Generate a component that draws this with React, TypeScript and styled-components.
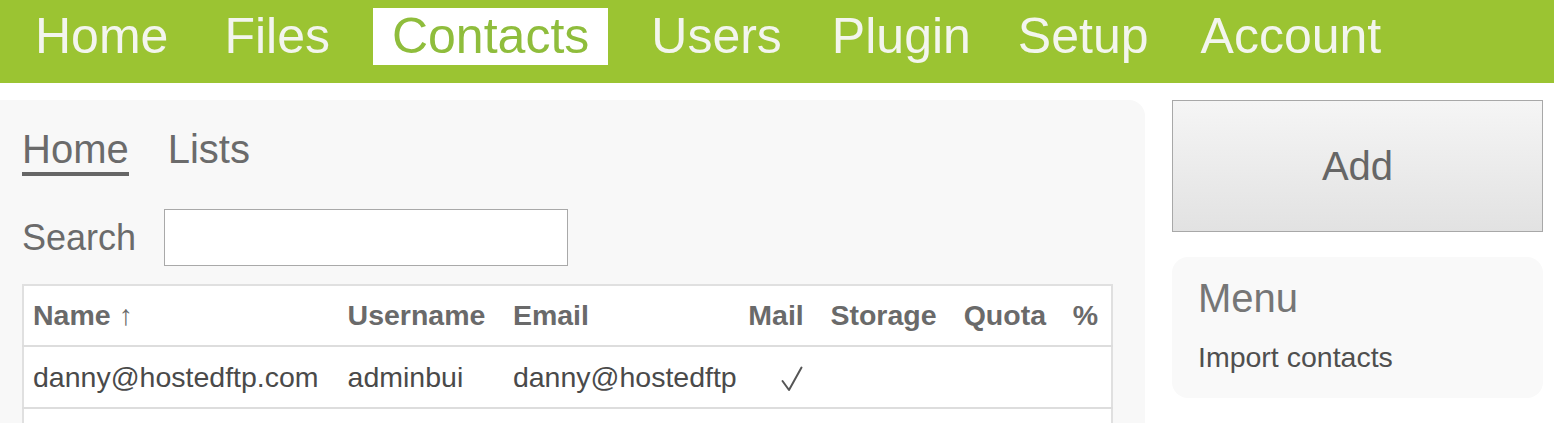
import React from "react";
import styled, { createGlobalStyle } from "styled-components";

const GlobalStyle = createGlobalStyle`
  html, body {
    margin: 0;
    padding: 0;
    background: #ffffff;
    font-family: "Liberation Sans", Arial, sans-serif;
  }
`;

const Page = styled.div`
  width: 1554px;
  height: 423px;
  overflow: hidden;
`;

const TopBar = styled.nav`
  height: 83px;
  background: #9bc432;
  display: flex;
  align-items: flex-start;
  padding-left: 16px;
  box-sizing: border-box;
`;

const NavItem = styled.a<{ $active?: boolean; $gap: number }>`
  display: block;
  margin-top: 8px;
  margin-right: ${(p) => p.$gap}px;
  padding: 0 19px;
  height: 57px;
  line-height: 57px;
  font-size: 50px;
  color: ${(p) => (p.$active ? "#8fbd3c" : "#f3f5ee")};
  background: ${(p) => (p.$active ? "#ffffff" : "transparent")};
  text-decoration: none;
  white-space: nowrap;
`;

const Body = styled.div`
  display: flex;
  align-items: flex-start;
  padding-top: 17px;
`;

const MainPanel = styled.section`
  width: 1145px;
  height: 340px;
  box-sizing: border-box;
  background: #f8f8f8;
  border-radius: 0 16px 0 0;
  padding: 26px 0 0 22px;
`;

const Tabs = styled.div`
  display: flex;
  gap: 39px;
  align-items: flex-start;
`;

const Tab = styled.a<{ $active?: boolean }>`
  font-size: 40px;
  line-height: 46px;
  color: #6b6b6b;
  text-decoration: none;
  border-bottom: 4px solid ${(p) => (p.$active ? "#666666" : "transparent")};
`;

const SearchRow = styled.div`
  display: flex;
  align-items: center;
  gap: 28px;
  margin-top: 33px;
`;

const SearchLabel = styled.label`
  font-size: 36px;
  color: #6b6b6b;
`;

const SearchInput = styled.input`
  width: 404px;
  height: 57px;
  box-sizing: border-box;
  border: 1px solid #a9a9a9;
  background: #ffffff;
  margin: 0;
  padding: 0 8px;
  font-size: 28px;
  font-family: inherit;
`;

const Table = styled.table`
  margin-top: 18px;
  width: 1091px;
  border-collapse: collapse;
  table-layout: fixed;
  background: #ffffff;
  border: 2px solid #e0e0e0;
  font-size: 28.5px;
`;

const Col = styled.col<{ $w: number }>`
  width: ${(p) => p.$w}px;
`;

const HeadCell = styled.th<{ $align?: string }>`
  height: 59px;
  padding: 0 18px 0 9px;
  text-align: ${(p) => p.$align || "left"};
  font-weight: bold;
  color: #6a6a6a;
  white-space: nowrap;
  overflow: hidden;
  border-bottom: 2px solid #dddddd;
`;

const Arrow = styled.span`
  font-weight: normal;
`;

const Cell = styled.td<{ $align?: string }>`
  height: 60px;
  padding: 0 18px 0 9px;
  text-align: ${(p) => p.$align || "left"};
  color: #4a4a4a;
  white-space: nowrap;
  overflow: hidden;
  border-bottom: 2px solid #dddddd;
`;

const ClipCell = styled(Cell)`
  padding-right: 0;
`;

const CheckIcon = styled.svg`
  display: inline-block;
  vertical-align: middle;
`;

const Side = styled.aside`
  margin-left: 27px;
  width: 371px;
  display: flex;
  flex-direction: column;
  gap: 25px;
`;

const AddButton = styled.button`
  height: 132px;
  width: 371px;
  border: 1px solid #a8a8a8;
  background: linear-gradient(#f5f5f5, #e2e2e2);
  color: #666666;
  font-size: 40px;
  font-family: inherit;
  padding: 0;
  margin: 0;
`;

const MenuBox = styled.div`
  height: 141px;
  box-sizing: border-box;
  background: #f9f9f9;
  border-radius: 16px;
  padding: 18px 0 0 26px;
`;

const MenuTitle = styled.div`
  font-size: 40px;
  line-height: 46px;
  color: #767676;
`;

const MenuLink = styled.a`
  display: block;
  margin-top: 20px;
  font-size: 28.5px;
  color: #4f4f4f;
  text-decoration: none;
`;

const navItems: { label: string; gap: number }[] = [
  { label: "Home", gap: 18 },
  { label: "Files", gap: 24 },
  { label: "Contacts", gap: 24 },
  { label: "Users", gap: 12 },
  { label: "Plugin", gap: 9 },
  { label: "Setup", gap: 14 },
  { label: "Account", gap: 0 },
];

const columns: { label: string; w: number; align?: string }[] = [
  { label: "Name", w: 315 },
  { label: "Username", w: 165 },
  { label: "Email", w: 235 },
  { label: "Mail", w: 82, align: "right" },
  { label: "Storage", w: 133 },
  { label: "Quota", w: 109 },
  { label: "%", w: 48 },
];

const Check = () => (
  <CheckIcon width="22" height="26" viewBox="0 0 22 26">
    <polyline
      points="1.5,15 8,24 20.5,1.5"
      fill="none"
      stroke="#555555"
      strokeWidth="2"
      strokeLinecap="round"
      strokeLinejoin="round"
    />
  </CheckIcon>
);

export default function App() {
  return (
    <Page>
      <GlobalStyle />
      <TopBar>
        {navItems.map((n) => (
          <NavItem key={n.label} $gap={n.gap} $active={n.label === "Contacts"} href="#">
            {n.label}
          </NavItem>
        ))}
      </TopBar>
      <Body>
        <MainPanel>
          <Tabs>
            <Tab $active href="#">Home</Tab>
            <Tab href="#">Lists</Tab>
          </Tabs>
          <SearchRow>
            <SearchLabel>Search</SearchLabel>
            <SearchInput type="text" />
          </SearchRow>
          <Table>
            <colgroup>
              {columns.map((c) => (
                <Col key={c.label} $w={c.w} />
              ))}
            </colgroup>
            <thead>
              <tr>
                {columns.map((c) => (
                  <HeadCell key={c.label} $align={c.align}>
                    {c.label}
                    {c.label === "Name" && <Arrow> ↑</Arrow>}
                  </HeadCell>
                ))}
              </tr>
            </thead>
            <tbody>
              <tr>
                <Cell>danny@hostedftp.com</Cell>
                <Cell>adminbui</Cell>
                <ClipCell>danny@hostedftp</ClipCell>
                <Cell $align="right"><Check /></Cell>
                <Cell />
                <Cell />
                <Cell />
              </tr>
              <tr>
                <Cell />
                <Cell />
                <Cell />
                <Cell />
                <Cell />
                <Cell />
                <Cell />
              </tr>
            </tbody>
          </Table>
        </MainPanel>
        <Side>
          <AddButton>Add</AddButton>
          <MenuBox>
            <MenuTitle>Menu</MenuTitle>
            <MenuLink href="#">Import contacts</MenuLink>
          </MenuBox>
        </Side>
      </Body>
    </Page>
  );
}
